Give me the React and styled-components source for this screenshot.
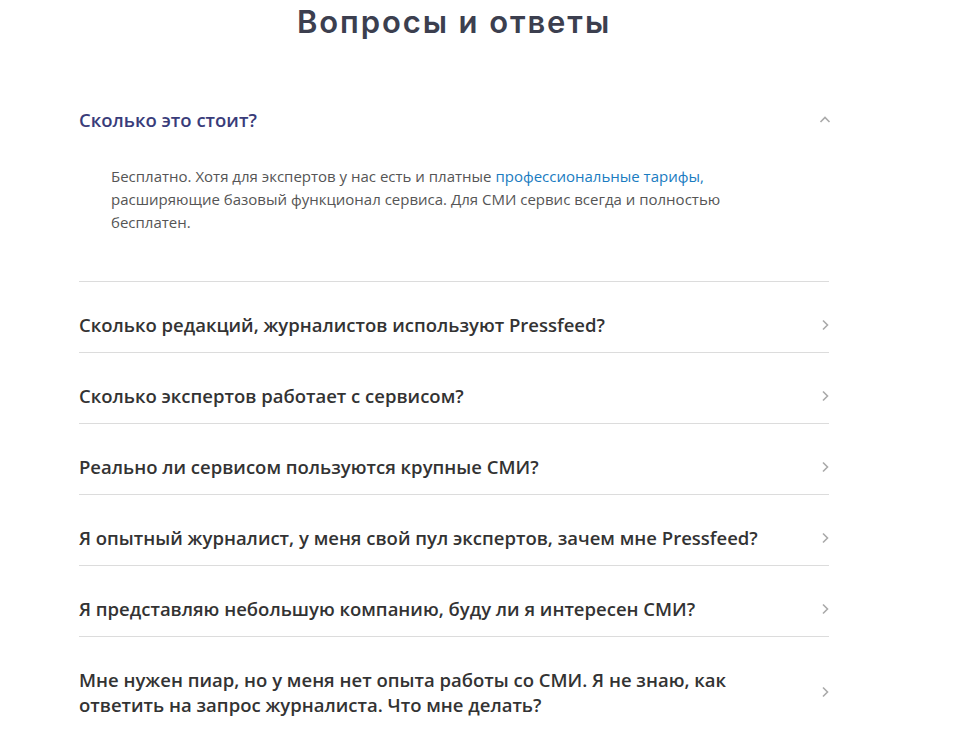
import styled, { createGlobalStyle } from "styled-components";
import { useState } from "react";

const Global = createGlobalStyle`
  body {
    margin: 0;
    background: #fff;
    font-family: "Open Sans", "Noto Sans", sans-serif;
  }
`;

const Page = styled.div`
  width: 750px;
  margin-left: 79px;
`;

const Title = styled.h2`
  margin: 0;
  padding-top: 2px;
  height: 83px;
  text-align: center;
  font-family: Inter, "Noto Sans", sans-serif;
  font-weight: 600;
  font-size: 31px;
  letter-spacing: 1.9px;
  line-height: 40px;
  color: #3c3f4f;
`;

const Item = styled.div`
  border-bottom: 1px solid #dcdcdc;
  &:last-child {
    border-bottom: none;
  }
`;

const Question = styled.div`
  display: flex;
  align-items: center;
  justify-content: space-between;
  padding: ${(p) => (p.open ? "22px 0 16px" : "30px 0 15px")};
  cursor: pointer;
  font-size: 18.5px;
  font-weight: 600;
  line-height: 25px;
  color: ${(p) => (p.open ? "#393c7a" : "#333")};
`;

const Text = styled.span`
  max-width: 700px;
`;

const Chevron = styled.svg`
  flex: none;
  width: 12px;
  height: 12px;
  margin-right: -2px;
`;

const Answer = styled.div`
  padding: 17px 0 47px 32px;
  font-size: 15px;
  line-height: 23px;
  color: #555;
  max-width: 640px;

  a {
    color: #1a7cc1;
    text-decoration: none;
  }
`;

const faq = [
  {
    q: "Сколько это стоит?",
    a: (
      <>
        Бесплатно. Хотя для экспертов у нас есть и платные{" "}
        <a href="#">профессиональные тарифы,</a> расширяющие базовый
        функционал сервиса. Для СМИ сервис всегда и полностью бесплатен.
      </>
    ),
  },
  { q: "Сколько редакций, журналистов используют Pressfeed?" },
  { q: "Сколько экспертов работает с сервисом?" },
  { q: "Реально ли сервисом пользуются крупные СМИ?" },
  { q: "Я опытный журналист, у меня свой пул экспертов, зачем мне Pressfeed?" },
  { q: "Я представляю небольшую компанию, буду ли я интересен СМИ?" },
  {
    q: "Мне нужен пиар, но у меня нет опыта работы со СМИ. Я не знаю, как ответить на запрос журналиста. Что мне делать?",
  },
];

function Arrow({ up }) {
  return (
    <Chevron viewBox="0 0 12 12" fill="none" stroke="#aaa" strokeWidth="1.6">
      {up ? (
        <polyline points="1.5,8 6,3.5 10.5,8" />
      ) : (
        <polyline points="4,1.5 8.5,6 4,10.5" />
      )}
    </Chevron>
  );
}

export default function App() {
  let [open, setOpen] = useState(0);

  return (
    <Page>
      <Global />
      <Title>Вопросы и ответы</Title>
      {faq.map((item, i) => (
        <Item key={i}>
          <Question open={open === i} onClick={() => setOpen(open === i ? -1 : i)}>
            <Text>{item.q}</Text>
            <Arrow up={open === i} />
          </Question>
          {open === i && item.a ? <Answer>{item.a}</Answer> : null}
        </Item>
      ))}
    </Page>
  );
}
